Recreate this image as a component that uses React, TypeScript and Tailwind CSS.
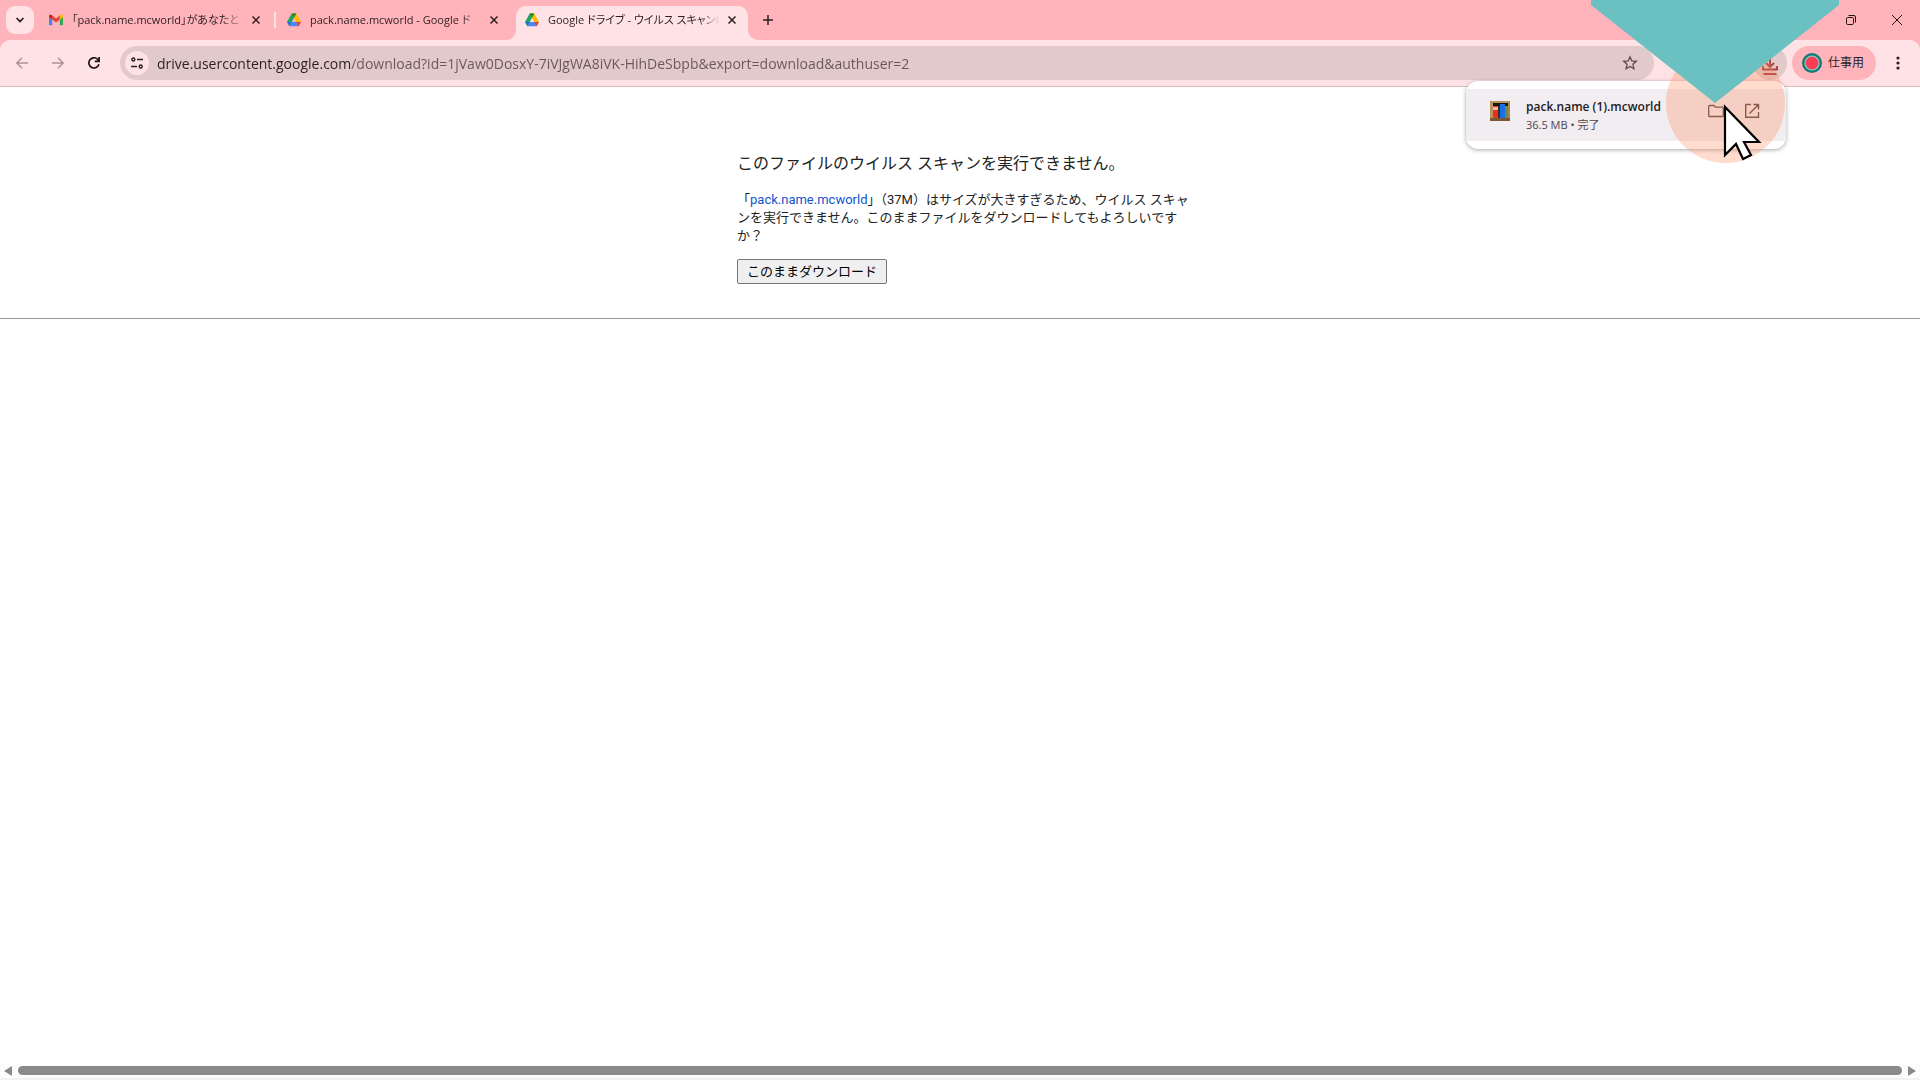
import React, { useState } from 'react';
import { Minus } from 'lucide-react';

interface Tab {
  icon: 'gmail' | 'drive';
  title: string;
}

const tabs: Tab[] = [
  { icon: 'gmail', title: '「pack.name.mcworld」があなたと' },
  { icon: 'drive', title: 'pack.name.mcworld - Google ド' },
  { icon: 'drive', title: 'Google ドライブ - ウイルス スキャンに' },
];

const GmailIcon = () => (
  <svg className="w-[14px] h-[14px] shrink-0" viewBox="0 0 14 14">
    <path d="M0 3v8.2c0 .6.4 1 1 1h2.2V6.5L0 4z" fill="#4285f4" />
    <path d="M10.8 12.2H13c.6 0 1-.4 1-1V4l-3.2 2.5z" fill="#34a853" />
    <path d="M10.8 2.6v3.9L14 4.1V3c0-1.4-1.6-1.9-2.5-1z" fill="#fbbc04" />
    <path d="M3.2 6.5V2.6L7 5.5l3.8-2.9v3.9L7 9.4z" fill="#ea4335" />
    <path d="M0 3v1.1l3.2 2.4V2.6L2.5 2C1.6 1.3 0 1.8 0 3z" fill="#c5221f" />
  </svg>
);

const DriveIcon = () => (
  <svg className="w-[14px] h-[14px] shrink-0" viewBox="0 0 14 14">
    <path d="M4.7 .6h4.6L7 4.8 2.5 13.2 0 9z" fill="#1ea362" />
    <path d="M4.7 .6h4.6L14 9H9.3z" fill="#ffba00" />
    <path d="M4.7 .6h4.6L7 4.8z" fill="#118044" />
    <path d="M2.5 13.2L4.8 9H14l-2.4 4.2z" fill="#4688f4" />
    <path d="M11.6 13.2L9.3 9H14z" fill="#ea4335" />
    <path d="M2.5 13.2L0 9h4.8z" fill="#2b6fd8" />
  </svg>
);

const TabItem: React.FC<{ tab: Tab; active: boolean; onSelect: () => void }> = ({ tab, active, onSelect }) => (
  <div
    className={`relative flex items-center w-[232px] h-[34px] pl-[9px] pr-2 pb-[6px] rounded-t-[10px] ${
      active ? 'bg-[#ffe2e5]' : ''
    }`}
  >
    {active && (
      <>
        <svg className="absolute -left-[10px] bottom-0 w-[10px] h-[10px]" viewBox="0 0 10 10">
          <path d="M10 0v10H0A10 10 0 0 0 10 0z" fill="#ffe2e5" />
        </svg>
        <svg className="absolute -right-[10px] bottom-0 w-[10px] h-[10px]" viewBox="0 0 10 10">
          <path d="M0 0v10h10A10 10 0 0 1 0 0z" fill="#ffe2e5" />
        </svg>
      </>
    )}
    {tab.icon === 'gmail' ? <GmailIcon /> : <DriveIcon />}
    <button
      onClick={onSelect}
      className="flex-1 min-w-0 ml-[9px] mr-1 h-5 overflow-hidden whitespace-nowrap text-left text-[11px] leading-5 text-[#2b1f20] [font-feature-settings:'palt'] mask-r-from-88%"
    >
      {tab.title}
    </button>
    <button title="閉じる" className="w-4 h-4 flex items-center justify-center">
      <svg className="w-2 h-2" viewBox="0 0 8 8" stroke="#2b1f20" strokeWidth="1.5">
        <path d="M.5.5l7 7M7.5.5l-7 7" />
      </svg>
    </button>
  </div>
);

const TabStrip = () => {
  const [current, setCurrent] = useState(2);

  return (
    <div className="flex items-end h-10 pl-[6px] bg-[#ffb3ba]">
      <button title="タブを検索" className="w-7 h-7 mb-[6px] mr-[6px] rounded-[9px] bg-[#ffe2e5] flex items-center justify-center">
        <svg className="w-2 h-[6px]" viewBox="0 0 8 6" fill="none" stroke="#1f1416" strokeWidth="1.6">
          <path d="M.6 1L4 4.5 7.4 1" />
        </svg>
      </button>
      {tabs.map((tab, i) => (
        <React.Fragment key={tab.title}>
          {i > 0 && (
            <div className={`w-[2px] h-4 mx-[2px] mb-3 ${i === 1 ? 'bg-[#ffe2e5]' : ''}`}></div>
          )}
          <TabItem tab={tab} active={current === i} onSelect={() => setCurrent(i)} />
        </React.Fragment>
      ))}
      <button title="新しいタブ" className="w-7 h-7 mb-[6px] ml-[6px] flex items-center justify-center">
        <svg className="w-[10px] h-[10px]" viewBox="0 0 10 10" stroke="#2b1f20" strokeWidth="1.5">
          <path d="M5 0v10M0 5h10" />
        </svg>
      </button>
      <div className="flex ml-auto h-10 text-[#1f1416]">
        <button title="最小化" className="w-[46px] flex items-center justify-center">
          <Minus size={12} strokeWidth={1} />
        </button>
        <button title="元に戻す" className="w-[46px] flex items-center justify-center">
          <svg className="w-[10px] h-[10px]" viewBox="0 0 10 10" fill="none" stroke="currentColor">
            <rect x=".5" y="2.5" width="7" height="7" rx="1.2" />
            <path d="M2.5.5H8A1.5 1.5 0 0 1 9.5 2v5.5" />
          </svg>
        </button>
        <button title="閉じる" className="w-[46px] flex items-center justify-center">
          <svg className="w-[10px] h-[10px]" viewBox="0 0 10 10" stroke="currentColor">
            <path d="M0 0l10 10M10 0L0 10" />
          </svg>
        </button>
      </div>
    </div>
  );
};

const DownloadBubble = () => (
  <div className="absolute right-[134px] top-[41px] z-10 w-80 py-2 rounded-xl bg-white shadow-[0_1px_4px_rgba(0,0,0,0.35)]">
    <div className="flex items-start h-[52px] pt-2 pl-6 pr-[26px] bg-[#f1edf1]">
      <svg className="w-5 h-5 mt-1 shrink-0" viewBox="0 0 20 20" shapeRendering="crispEdges">
        <path d="M0 0h20v20H0z" fill="#7a5632" />
        <path d="M0 0h20v2H0zM0 2h3v15H0z" fill="#b8925f" />
        <path d="M3 2h15v3H3z" fill="#1d1712" />
        <path d="M3 5h5v12H3z" fill="#e8301f" />
        <path d="M3 6h5v3H3z" fill="#f2b9a4" />
        <path d="M8 5h2v12H8z" fill="#3a2d26" />
        <path d="M10 3h5v14h-5z" fill="#1a6fe8" />
        <path d="M15 5h3v12h-3z" fill="#5f8f4e" />
        <path d="M18 2h2v15h-2z" fill="#a8824c" />
      </svg>
      <div className="ml-4 flex-1">
        <div className="text-xs leading-5 font-semibold text-[#1f1b1e]">pack.name (1).mcworld</div>
        <div className="text-[11px] leading-4 text-[#4d464b]">36.5 MB • 完了</div>
      </div>
      <button title="フォルダを開く" className="mt-[6px] mr-5">
        <svg className="w-4 h-4" viewBox="0 0 16 16" fill="none" stroke="#5a4645" strokeWidth="1.3">
          <path d="M.7 3.3c0-.5.3-.8.8-.8h4.3l1.7 1.7h7c.5 0 .8.3.8.8v7.7c0 .5-.3.8-.8.8h-13c-.5 0-.8-.3-.8-.8z" />
        </svg>
      </button>
      <button title="開く" className="mt-[6px]">
        <svg className="w-4 h-4" viewBox="0 0 16 16" fill="none" stroke="#5a4645" strokeWidth="1.4">
          <path d="M7 1.5H1.7v12.8h12.8V9M9.5 1.5h5v5M14.3 1.7L5.5 10.5" />
        </svg>
      </button>
    </div>
  </div>
);

const Toolbar = () => (
  <div className="bg-[#ffb3ba]">
    <div className="relative flex items-center h-[47px] pl-3 pr-3 rounded-t-[10px] border-b border-[#d9bcbf] bg-[#ffe2e5]">
      <button title="戻る" className="w-5 h-5 mr-4 flex items-center justify-center">
        <svg className="w-3 h-3" viewBox="0 0 12 12" fill="none" stroke="#b39496" strokeWidth="1.5">
          <path d="M12 6H1M6 .7L.9 6 6 11.3" />
        </svg>
      </button>
      <button title="進む" className="w-5 h-5 mr-4 flex items-center justify-center">
        <svg className="w-3 h-3" viewBox="0 0 12 12" fill="none" stroke="#b39496" strokeWidth="1.5">
          <path d="M0 6h11M6 .7L11.1 6 6 11.3" />
        </svg>
      </button>
      <button title="再読み込み" className="w-5 h-5 mr-4 flex items-center justify-center">
        <svg className="w-3 h-3" viewBox="0 0 12 12" fill="none" stroke="#1f1416" strokeWidth="1.7">
          <path d="M10.9 7.2A5.1 5.1 0 1 1 9.8 2.5L11 3.9M11.1 0v4.4H6.8" />
        </svg>
      </button>

      <div className="flex-1 flex items-center h-[34px] pl-[5px] pr-4 rounded-full bg-[#e2c9ca]">
        <button title="サイト情報" className="w-6 h-6 rounded-full bg-[#ffe2e5] flex items-center justify-center">
          <svg className="w-3 h-3" viewBox="0 0 12 12" fill="none" stroke="#2b1f20" strokeWidth="1.4">
            <circle cx="2.3" cy="2.5" r="1.5" />
            <path d="M6 2.5h6M0 9.5h6" />
            <circle cx="9.7" cy="9.5" r="1.5" />
          </svg>
        </button>
        <input
          aria-label="アドレス"
          defaultValue="drive.usercontent.google.com/download?id=1jVaw0DosxY-7iVJgWA8iVK-HihDeSbpb&export=download&authuser=2"
          className="flex-1 ml-2 h-6 text-sm text-transparent bg-clip-text bg-[linear-gradient(90deg,#2b1f20_193px,#685658_193px)] outline-none"
        />
        <button title="ブックマーク">
          <svg className="w-4 h-4" viewBox="0 0 16 16" fill="none" stroke="#5c4a4c" strokeWidth="1.3">
            <path d="M8 1.8l1.8 4.1 4.5.4-3.4 3 1 4.4L8 11.4l-3.9 2.3 1-4.4-3.4-3 4.5-.4z" />
          </svg>
        </button>
      </div>

      <button title="ダウンロード" className="w-[34px] h-[34px] ml-[99px] rounded-full bg-[#e2c9ca] flex items-center justify-center">
        <svg className="w-4 h-[18px] mt-2" viewBox="0 0 16 18" fill="none" stroke="#a83c40" strokeWidth="1.8">
          <path d="M8 0v8M4 5l4 4 4-4M1 8v3.5h14V8M1.5 16h13" />
        </svg>
      </button>
      <button className="flex items-center w-[84px] h-[34px] ml-[5px] pl-[10px] rounded-full bg-[#ffb3ba] text-xs text-[#2b1f20]">
        <svg className="w-5 h-5 mr-[6px]" viewBox="0 0 20 20">
          <circle cx="10" cy="10" r="10" fill="#137c78" />
          <circle cx="10" cy="10" r="7.6" fill="#8ed8c8" />
          <circle cx="10" cy="10" r="6.5" fill="#fa3c55" />
        </svg>
        仕事用
      </button>
      <button title="メニュー" className="w-5 h-5 ml-3 flex items-center justify-center">
        <svg className="w-[14px] h-[14px]" viewBox="0 0 14 14" fill="#2b1f20">
          <circle cx="7" cy="2" r="1.6" />
          <circle cx="7" cy="7" r="1.6" />
          <circle cx="7" cy="12" r="1.6" />
        </svg>
      </button>
      <DownloadBubble />
    </div>
  </div>
);

const WarningPage = () => (
  <main className="flex-1 flex flex-col pt-[67px] font-[Roboto,'Noto_Sans_CJK_JP',sans-serif] text-[#222]">
    <div className="w-full max-w-[460px] mx-auto pl-[7px]">
      <h1 className="text-base leading-5">このファイルのウイルス スキャンを実行できません。</h1>
      <p className="mt-[17px] text-[13px] leading-[18px]">
        「<a href="#" className="text-[#15c]">pack.name.mcworld</a>」（37M）はサイズが大きすぎるため、ウイルス スキャンを実行できません。このままファイルをダウンロードしてもよろしいですか？
      </p>
      <button className="mt-[14px] h-[25px] w-[150px] border border-[#767676] rounded-[2px] bg-[#efefef] text-[13px] text-black">
        このままダウンロード
      </button>
    </div>
    <hr className="mt-[34px] border-[#9a9a9a]" />
    <div className="flex items-center gap-[6px] h-[17px] mt-auto px-1 bg-[#fcfcfc] border-b-2 border-[#f1f1f1]">
      <svg className="w-2 h-[10px]" viewBox="0 0 8 10" fill="#8a8a8a">
        <path d="M8 0v10L0 5z" />
      </svg>
      <div className="flex-1 h-[9px] rounded-full bg-[#8a8a8a]"></div>
      <svg className="w-2 h-[10px]" viewBox="0 0 8 10" fill="#8a8a8a">
        <path d="M0 0v10l8-5z" />
      </svg>
    </div>
  </main>
);

// teal arrow and click halo drawn on top of the window
const PointerOverlay = () => (
  <div className="absolute right-[81px] top-0 z-20 w-[248px] h-[164px] pointer-events-none">
    <svg className="w-full h-full" viewBox="0 0 248 164">
      <circle cx="134.5" cy="103.5" r="59.5" fill="#ff8c5a" fillOpacity=".3" />
      <path d="M0 0h248v5L124 103 0 5z" fill="#6bc0c1" />
      <path
        d="M134 107v48l11-11 7 15 8-4-7-13h15z"
        fill="#fff"
        stroke="#000"
        strokeWidth="2.2"
      />
    </svg>
  </div>
);

const App = () => (
  <div className="relative flex flex-col min-h-screen overflow-hidden bg-white font-['Open_Sans','Noto_Sans_CJK_JP',sans-serif]">
    <TabStrip />
    <Toolbar />
    <WarningPage />
    <PointerOverlay />
  </div>
);

export default App;
